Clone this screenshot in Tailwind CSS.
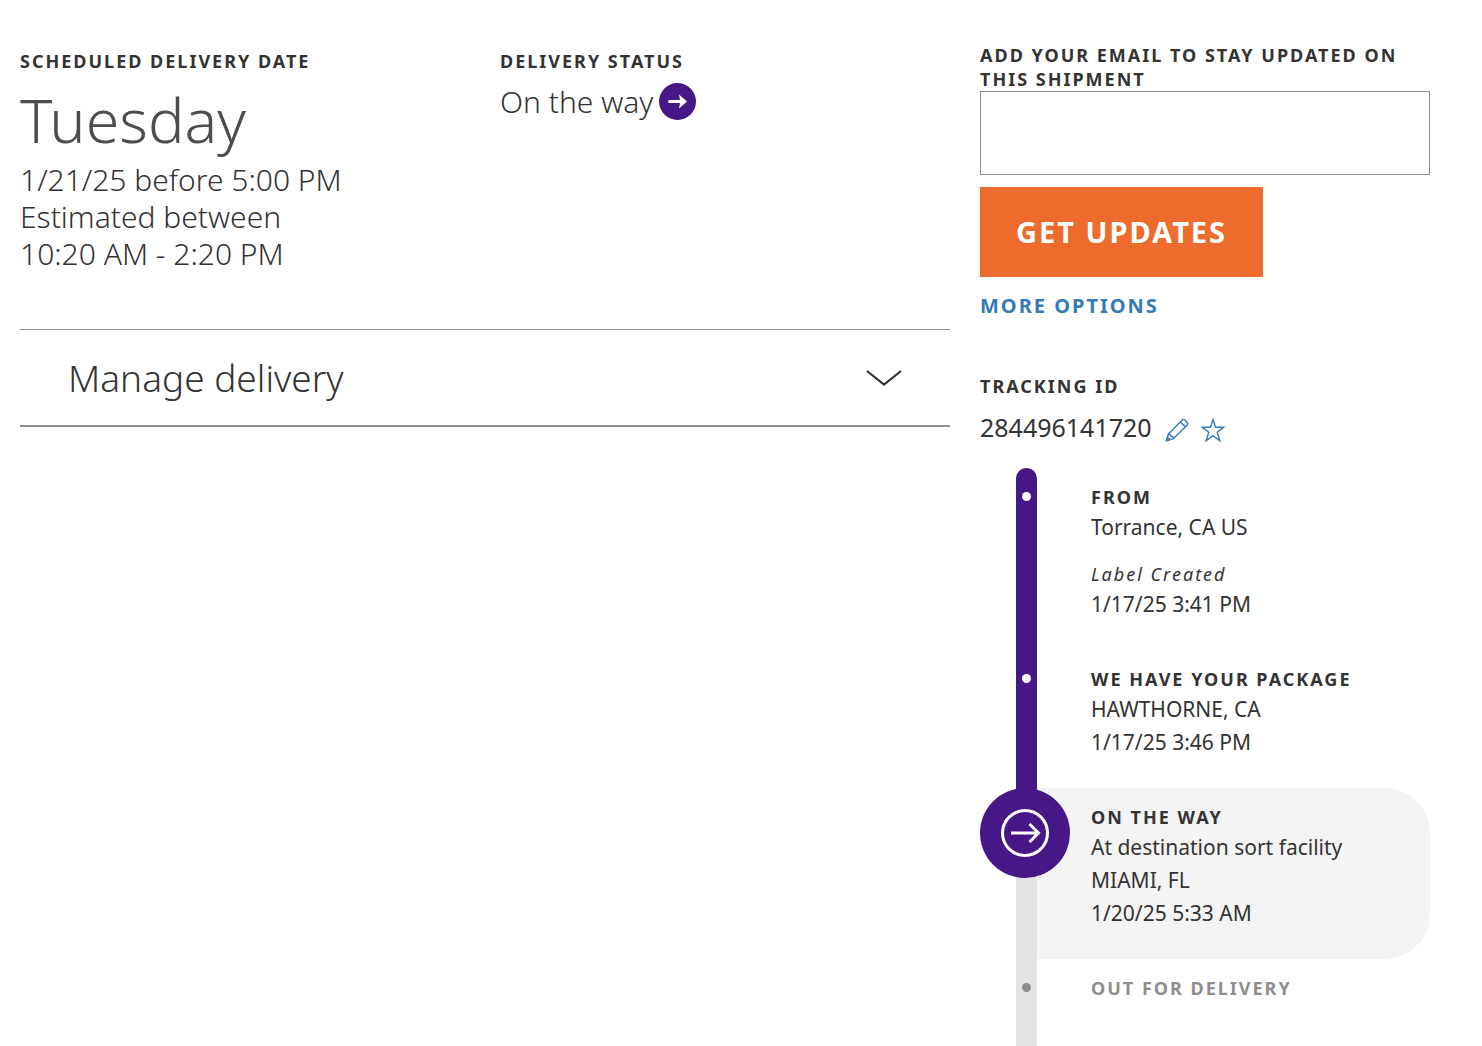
<!DOCTYPE html>
<html lang="en">
  <head>
    <meta charset="UTF-8" />
    <meta name="viewport" content="width=device-width, initial-scale=1.0" />
    <title>Shipment tracking</title>
    <script src="https://cdn.jsdelivr.net/npm/@tailwindcss/browser@4"></script>
  </head>
  <body class="bg-white text-[#333333] font-['Noto_Sans','Open_Sans',sans-serif]">
    <main class="grid grid-cols-3 gap-x-[30px] items-start pl-5 pr-[52px] pt-[43px]">
      <!-- Delivery summary -->
      <div class="col-span-2 pt-[6px]">
        <div class="grid grid-cols-2 gap-x-[30px]">
          <section>
            <h2 class="text-[18px] leading-6 font-bold tracking-[2px]">SCHEDULED DELIVERY DATE</h2>
            <p class="mt-[10px] text-[61px] leading-[74px] font-light text-[#4d4d4d]">Tuesday</p>
            <p class="mt-1 text-[30px] leading-[37px] font-light">1/21/25 before 5:00 PM<br />Estimated between<br />10:20 AM - 2:20 PM</p>
          </section>
          <section>
            <h2 class="text-[18px] leading-6 font-bold tracking-[2px]">DELIVERY STATUS</h2>
            <p class="mt-[9px] flex items-center gap-[6px] text-[30px] leading-[39px] font-light">
              On the way
              <svg class="size-[37px]" viewBox="0 0 37 37" aria-hidden="true">
                <circle cx="18.5" cy="18.5" r="18.5" fill="#471787" />
                <path d="M10.5 18.5h11" stroke="#fff" stroke-width="3" stroke-linecap="round" />
                <path d="M20 11.500l8 7-8 7c1.300-4.500 1.300-9.500 0-14z" fill="#fff" />
              </svg>
            </p>
          </section>
        </div>

        <button class="mt-[57px] w-full flex items-center justify-between border-t border-b-2 border-t-[#8e8e8e] border-b-[#8e8e8e] px-12 h-[98px] text-left">
          <span class="text-[37px] leading-[48px] font-light">Manage delivery</span>
          <svg class="w-9 h-4" viewBox="0 0 36 16" fill="none" stroke="#333333" stroke-width="2.2" aria-hidden="true">
            <path d="M1 1l17 13.500L35 1" />
          </svg>
        </button>
      </div>

      <!-- Updates and tracking -->
      <div>
        <form>
          <label for="email" class="block text-[18px] leading-6 font-bold tracking-[2px]">ADD YOUR EMAIL TO STAY UPDATED ON THIS SHIPMENT</label>
          <input id="email" type="email" class="block w-full h-[84px] px-4 text-[29px] border border-[#8e8e8e] bg-white" />
          <button type="button" class="mt-3 h-[90px] px-9 bg-[#ed6b2d] text-white text-[29px] font-bold tracking-[2px]">GET UPDATES</button>
        </form>
        <a href="#" class="block mt-[14px] text-[20px] leading-[30px] font-bold tracking-[2px] text-[#337ab7]">MORE OPTIONS</a>

        <h2 class="mt-[53px] text-[18px] leading-6 font-bold tracking-[2px]">TRACKING ID</h2>
        <div class="mt-[13px] flex items-center text-[25px] leading-8">
          <span>284496141720</span>
          <button aria-label="Edit nickname" class="ml-[13px] pt-[6px]">
            <svg class="size-6" viewBox="0 0 24 24" fill="none" stroke="#337ab7" stroke-width="1.4" stroke-linejoin="round">
              <path d="M1.200 22.800L3.500 16L17.300 1.900Q18.500 .900 19.700 1.900L22.300 4.500Q23.300 5.700 22.300 6.900L8.200 20.700z" />
              <path d="M15.400 3.900L20.300 8.800M3.500 16q2.700 .200 2.500 2.300q2.300 -.200 2.200 2.400M1.500 22.500l1.100-3.200 2.200 2.200z" />
            </svg>
          </button>
          <button aria-label="Add to watch list" class="ml-3 pt-[6px]">
            <svg class="size-6" viewBox="0 0 24 24" fill="none" stroke="#337ab7" stroke-width="1.4">
              <path d="M12 1.700L14.600 9.300H22.700L16.200 14.200L18.900 22.800L12 17.600L5.100 22.800L7.800 14.200L1.300 9.300H9.400z" />
            </svg>
          </button>
        </div>

        <!-- Timeline -->
        <ol class="mt-[25px] text-[21px] leading-[33px]">
          <li class="flex">
            <div class="ml-9 w-[21px] shrink-0 rounded-t-full bg-[#471787] flex justify-center pt-6">
              <span class="size-[9px] rounded-full bg-white"></span>
            </div>
            <div class="pl-[54px] pt-[15px] pb-[29px]">
              <h3 class="text-[18px] leading-7 font-bold tracking-[2px]">FROM</h3>
              <p>Torrance, CA US</p>
              <p class="mt-4 text-[18px] leading-7 italic tracking-[2px]">Label Created</p>
              <p>1/17/25 3:41 PM</p>
            </div>
          </li>
          <li class="flex">
            <div class="ml-9 w-[21px] shrink-0 bg-[#471787] flex justify-center pt-6">
              <span class="size-[9px] rounded-full bg-white"></span>
            </div>
            <div class="pl-[54px] pt-[15px] pb-[29px]">
              <h3 class="text-[18px] leading-7 font-bold tracking-[2px]">WE HAVE YOUR PACKAGE</h3>
              <p>HAWTHORNE, CA</p>
              <p>1/17/25 3:46 PM</p>
            </div>
          </li>
          <li class="relative flex">
            <div class="ml-9 w-[21px] shrink-0 bg-linear-to-b from-[#471787] from-50% to-[#e3e3e3] to-50%"></div>
            <div class="flex-1 rounded-r-[45px] bg-[#f4f4f4] pl-[54px] pt-[15px] pb-[29px]">
              <h3 class="text-[18px] leading-7 font-bold tracking-[2px]">ON THE WAY</h3>
              <p>At destination sort facility</p>
              <p>MIAMI, FL</p>
              <p>1/20/25 5:33 AM</p>
            </div>
            <svg class="absolute left-0 top-0 size-[90px]" viewBox="0 0 90 90" fill="none" stroke="#fff" stroke-width="3" aria-hidden="true">
              <circle cx="45" cy="45" r="45" fill="#471787" stroke="none" />
              <circle cx="45" cy="45" r="22.500" />
              <path d="M31 45h28M49.500 36l9 9-9 9" />
            </svg>
          </li>
          <li class="flex">
            <div class="ml-9 w-[21px] shrink-0 bg-[#e3e3e3] flex justify-center pt-6">
              <span class="size-[9px] rounded-full bg-[#8e8e8e]"></span>
            </div>
            <div class="pl-[54px] pt-[15px] pb-11">
              <h3 class="text-[18px] leading-7 font-bold tracking-[2px] text-[#8e8e8e]">OUT FOR DELIVERY</h3>
            </div>
          </li>
        </ol>
      </div>
    </main>
  </body>
</html>
